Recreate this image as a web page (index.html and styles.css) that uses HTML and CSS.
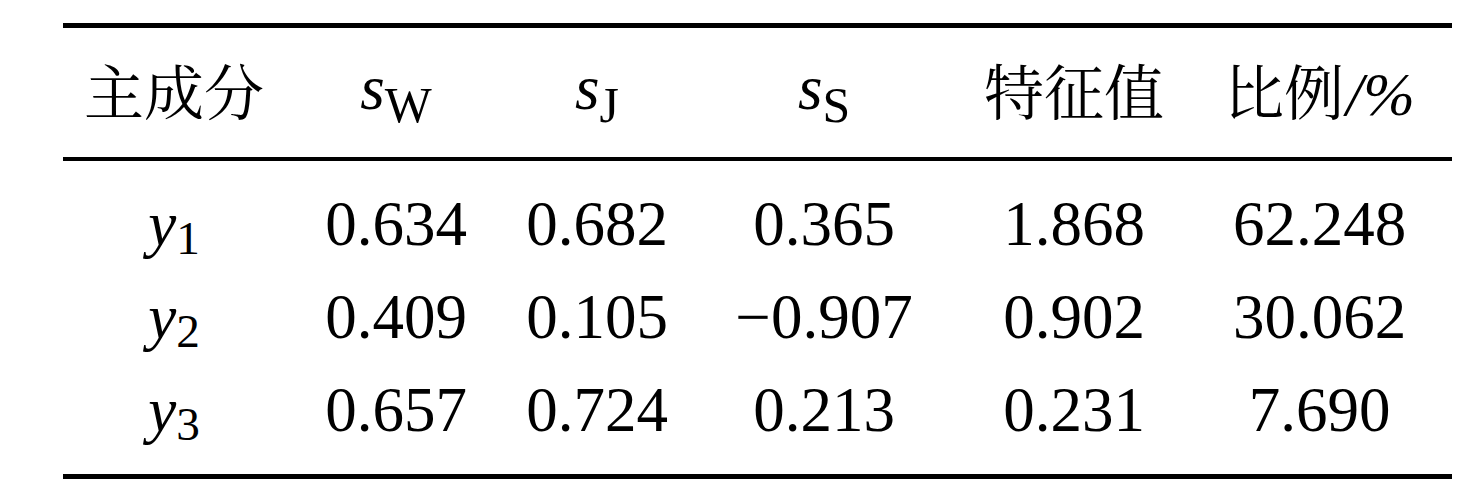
FILE: index.html
```html
<!DOCTYPE html>
<html lang="zh">
<head>
  <meta charset="UTF-8">
  <title>主成分分析</title>
  <link rel="stylesheet" href="styles.css">
</head>
<body>
  <table class="pca-table">
    <colgroup>
      <col class="col-name">
      <col class="col-w">
      <col class="col-j">
      <col class="col-s">
      <col class="col-eigen">
      <col class="col-ratio">
    </colgroup>
    <thead>
      <tr>
        <th><span class="cjk">主成分</span></th>
        <th><span class="math">s<sub class="cap">W</sub></span></th>
        <th><span class="math">s<sub class="cap">J</sub></span></th>
        <th><span class="math">s<sub class="cap">S</sub></span></th>
        <th><span class="cjk">特征值</span></th>
        <th><span class="cjk">比例<i class="unit">/%</i></span></th>
      </tr>
    </thead>
    <tbody>
      <tr>
        <td><span class="math">y<sub>1</sub></span></td>
        <td>0.634</td>
        <td>0.682</td>
        <td>0.365</td>
        <td>1.868</td>
        <td>62.248</td>
      </tr>
      <tr>
        <td><span class="math">y<sub>2</sub></span></td>
        <td>0.409</td>
        <td>0.105</td>
        <td>−0.907</td>
        <td>0.902</td>
        <td>30.062</td>
      </tr>
      <tr>
        <td><span class="math">y<sub>3</sub></span></td>
        <td>0.657</td>
        <td>0.724</td>
        <td>0.213</td>
        <td>0.231</td>
        <td>7.690</td>
      </tr>
    </tbody>
  </table>
</body>
</html>
```

FILE: styles.css
```css
* {
  box-sizing: border-box;
  margin: 0;
  padding: 0;
}

body {
  background: #fff;
  color: #000;
  font-family: "Liberation Serif", "Noto Serif CJK SC", "Noto Sans CJK SC", serif;
}

.pca-table {
  margin: 23px 0 0 63px;
  width: 1389px;
  table-layout: fixed;
  border-collapse: separate;
  border-spacing: 0;
  font-size: 63px;
}

.col-name { width: 222px; }
.col-w { width: 222px; }
.col-j { width: 180px; }
.col-s { width: 274px; }
.col-eigen { width: 226px; }
.col-ratio { width: 265px; }

th,
td {
  text-align: center;
  vertical-align: baseline;
  white-space: nowrap;
}

/* header row: top rule + mid rule */
th {
  font-weight: normal;
  line-height: 120px;
  padding-bottom: 9px;
  border-top: 5px solid #000;
  border-bottom: 4px solid #000;
}

.cjk {
  font-family: "Noto Serif CJK SC", "Noto Sans CJK SC", "Liberation Serif", sans-serif;
  font-size: 60px;
  line-height: 0;
  vertical-align: -6px;
}

.unit {
  font-family: "Liberation Serif", serif;
  font-size: 62px;
  margin-left: 2px;
}

td {
  line-height: 93px;
}

tbody tr:first-child td {
  padding-top: 17px;
}

/* bottom rule */
tbody tr:last-child td {
  padding-bottom: 17px;
  border-bottom: 5px solid #000;
}

.math {
  font-style: italic;
}

.math sub {
  font-style: normal;
  font-size: 0.75em;
  line-height: 0;
  vertical-align: -0.18em;
}

.math sub.cap {
  font-size: 0.79em;
  vertical-align: -0.26em;
}
```
